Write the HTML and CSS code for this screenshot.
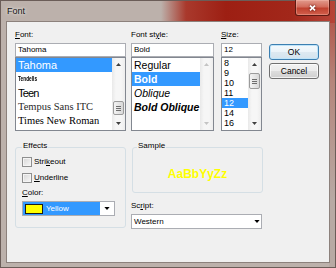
FILE: index.html
```html
<!DOCTYPE html>
<html>
<head>
<meta charset="utf-8">
<link rel="stylesheet" href="styles.css">
</head>
<body>
<div class="window">
  <div class="titlebar">
    <span class="title">Font</span>
    <div class="close"><svg width="7" height="6" viewBox="0 0 7 6"><path d="M1 0.6 L6 5.4 M6 0.6 L1 5.4" stroke="#fff" stroke-width="1.7"/></svg></div>
  </div>
  <div class="client">
    <div class="top">
      <div class="col col-font">
        <div class="label"><u>F</u>ont:</div>
        <div class="edit">Tahoma</div>
        <div class="list">
          <div class="items rows14">
            <div class="item sel f-tahoma">Tahoma</div>
            <div class="item f-tendells"><span>Tendells</span></div>
            <div class="item f-teen">Teen</div>
            <div class="item f-tempus">Tempus Sans ITC</div>
            <div class="item f-times">Times New Roman</div>
          </div>
          <div class="vscroll">
            <div class="sb-btn"><svg width="5" height="3" viewBox="0 0 7 4"><path d="M0 4 L3.5 0 L7 4Z" fill="#404040"/></svg></div>
            <div class="sb-track"><div class="thumb thumb-font"><i></i><i></i><i></i></div></div>
            <div class="sb-btn"><svg width="5" height="3" viewBox="0 0 7 4"><path d="M0 0 L3.5 4 L7 0Z" fill="#404040"/></svg></div>
          </div>
        </div>
      </div>
      <div class="col col-style">
        <div class="label">Font st<u>y</u>le:</div>
        <div class="edit">Bold</div>
        <div class="list">
          <div class="items rows14">
            <div class="item st">Regular</div>
            <div class="item st sel st-bold">Bold</div>
            <div class="item st st-italic">Oblique</div>
            <div class="item st st-bold st-italic">Bold Oblique</div>
          </div>
          <div class="vscroll">
            <div class="sb-btn"><svg width="5" height="3" viewBox="0 0 7 4"><path d="M0 4 L3.5 0 L7 4Z" fill="#c4c4c4"/></svg></div>
            <div class="sb-track"></div>
            <div class="sb-btn"><svg width="5" height="3" viewBox="0 0 7 4"><path d="M0 0 L3.5 4 L7 0Z" fill="#c4c4c4"/></svg></div>
          </div>
        </div>
      </div>
      <div class="col col-size">
        <div class="label"><u>S</u>ize:</div>
        <div class="edit">12</div>
        <div class="list">
          <div class="items rows10">
            <div class="item sz">8</div>
            <div class="item sz">9</div>
            <div class="item sz">10</div>
            <div class="item sz">11</div>
            <div class="item sz sel">12</div>
            <div class="item sz">14</div>
            <div class="item sz">16</div>
          </div>
          <div class="vscroll">
            <div class="sb-btn"><svg width="5" height="3" viewBox="0 0 7 4"><path d="M0 4 L3.5 0 L7 4Z" fill="#404040"/></svg></div>
            <div class="sb-track"><div class="thumb thumb-size"><i></i><i></i><i></i></div></div>
            <div class="sb-btn"><svg width="5" height="3" viewBox="0 0 7 4"><path d="M0 0 L3.5 4 L7 0Z" fill="#404040"/></svg></div>
          </div>
        </div>
      </div>
      <div class="col col-btns">
        <div class="btn btn-default">OK</div>
        <div class="btn">Cancel</div>
      </div>
    </div>
    <div class="bottom">
      <div class="group effects">
        <div class="legend">Effects</div>
        <div class="check-row first"><span class="checkbox"></span><span>Stri<u>k</u>eout</span></div>
        <div class="check-row"><span class="checkbox"></span><span><u>U</u>nderline</span></div>
        <div class="label color-label"><u>C</u>olor:</div>
        <div class="combo color-combo">
          <div class="combo-sel"><span class="swatch"></span><span>Yellow</span></div>
          <div class="combo-arrow"><svg width="6" height="3" viewBox="0 0 7 4"><path d="M0 0 L3.5 4 L7 0Z" fill="#000"/></svg></div>
        </div>
      </div>
      <div class="right">
        <div class="group sample">
          <div class="legend">Sample</div>
          <div class="sample-text">AaBbYyZz</div>
        </div>
        <div class="label script-label">Sc<u>r</u>ipt:</div>
        <div class="combo script-combo">
          <div class="combo-text">Western</div>
          <div class="combo-arrow"><svg width="6" height="3" viewBox="0 0 7 4"><path d="M0 0 L3.5 4 L7 0Z" fill="#000"/></svg></div>
        </div>
      </div>
    </div>
  </div>
</div>
</body>
</html>
```

FILE: styles.css
```css
html, body {
  margin: 0;
  padding: 0;
  background: #ffffff;
}

.window {
  width: 336px;
  height: 268px;
  box-sizing: border-box;
  padding: 0 5px 4px 5px;
  display: flex;
  flex-direction: column;
  font-family: "Liberation Sans", Arial, sans-serif;
  color: #000;
  border: 1px solid #6b5d58;
  background:
    linear-gradient(to right, rgba(0,0,0,0) 0px, rgba(0,0,0,0) 160px, #a9392c 185px, #9d1f13 225px, #a2271a 290px, #b8463a 336px) top left / 100% 22px no-repeat,
    linear-gradient(to bottom, #b24a3e 0px, #b5857b 80px, #b8aaa4 200px) top right / 6px 100% no-repeat,
    #bcb1ab;
}

.titlebar {
  height: 21px;
  margin-top: -1px;
  display: flex;
  justify-content: space-between;
  align-items: flex-start;
  flex-shrink: 0;
}

.title {
  font-family: "Liberation Sans", Arial, sans-serif;
  font-size: 9px;
  line-height: 10px;
  margin: 6px 0 0 1px;
  color: #151515;
  text-shadow: 0 0 3px rgba(255, 255, 255, 0.8), 0 0 6px rgba(255, 255, 255, 0.5);
}

.close {
  width: 35px;
  height: 16px;
  box-sizing: border-box;
  margin-right: 0px;
  border: 1px solid #5e1a12;
  border-top: none;
  border-radius: 0 0 3px 3px;
  background: linear-gradient(to bottom, #e19a8c 0%, #d36c5c 45%, #c0412f 55%, #d2604c 100%);
  box-shadow: inset 0 0 0 1px rgba(255, 200, 190, 0.35);
  display: flex;
  align-items: center;
  justify-content: center;
}

.close svg {
  filter: drop-shadow(0 0 1px rgba(60, 0, 0, 0.9));
}

.client {
  flex: 1;
  box-sizing: border-box;
  background: #f0f0f0;
  border: 1px solid #8c817c;
  padding: 8px 0 0 8px;
  display: flex;
  flex-direction: column;
  font-size: 8px;
}

.top {
  display: flex;
  align-items: flex-start;
}

.col {
  display: flex;
  flex-direction: column;
}

.col-font { width: 111px; margin-right: 5px; }
.col-style { width: 83px; margin-right: 7px; }
.col-size { width: 41px; margin-right: 7px; }
.col-btns { width: 50px; }

.label {
  font-size: 8px;
  line-height: 10px;
  height: 13px;
  white-space: nowrap;
}

.edit {
  height: 14px;
  box-sizing: border-box;
  border: 1px solid #abadb3;
  border-top-color: #abadb3;
  background: #fff;
  padding-left: 2px;
  font-size: 8px;
  line-height: 12px;
  white-space: nowrap;
}

.list {
  height: 74px;
  box-sizing: border-box;
  border: 1px solid #828790;
  background: #fff;
  display: flex;
  overflow: hidden;
}

.items {
  flex: 1;
  overflow: hidden;
  min-width: 0;
}

.item {
  white-space: nowrap;
  padding-left: 2px;
  overflow: hidden;
}

.rows14 .item {
  height: 14px;
  line-height: 14px;
}

.rows10 .item {
  height: 10px;
  line-height: 10px;
}

.item.sel {
  background: #3399ff;
  color: #fff;
}

.f-tahoma {
  font-family: "Liberation Sans", Arial, sans-serif;
  font-size: 11px;
}

.f-tendells span {
  display: inline-block;
  font-family: "Liberation Sans", Arial, sans-serif;
  font-weight: bold;
  font-size: 8px;
  transform: scaleX(0.6);
  transform-origin: left center;
}

.f-teen {
  font-family: "Liberation Sans", Arial, sans-serif;
  font-size: 11px;
  letter-spacing: -0.8px;
}

.f-tempus {
  font-family: "Liberation Serif", "Times New Roman", serif;
  font-size: 10.5px;
  color: #2a2a2a;
}

.f-times {
  font-family: "Liberation Serif", "Times New Roman", serif;
  font-size: 10.5px;
}

.st {
  font-family: "Liberation Sans", Arial, sans-serif;
  font-size: 10.5px;
}

.st-bold { font-weight: bold; }
.st-italic { font-style: italic; }

.sz {
  font-size: 9px;
}

.vscroll {
  width: 13px;
  flex-shrink: 0;
  display: flex;
  flex-direction: column;
  background: linear-gradient(to right, #e9e9e9, #f6f6f6 30%, #f6f6f6 70%, #ededed);
}

.sb-btn {
  height: 13px;
  flex-shrink: 0;
  display: flex;
  align-items: center;
  justify-content: center;
}

.sb-btn svg { display: block; }

.sb-track {
  flex: 1;
  display: flex;
  flex-direction: column;
}

.thumb {
  margin: 0 1px;
  box-sizing: border-box;
  border: 1px solid #9b9b9b;
  border-radius: 2px;
  background: linear-gradient(to right, #f3f3f3, #e6e6e6 50%, #d8d8d8);
  display: flex;
  flex-direction: column;
  align-items: center;
  justify-content: center;
  gap: 1px;
}

.thumb i {
  display: block;
  width: 5px;
  height: 1px;
  background: #6d6d6d;
}

.thumb-font {
  margin-top: 30px;
  height: 14px;
}

.thumb-size {
  margin-top: 2px;
  height: 16px;
}

.btn {
  height: 16px;
  box-sizing: border-box;
  border: 1px solid #707070;
  border-radius: 3px;
  background: linear-gradient(to bottom, #f2f2f2 0%, #ebebeb 50%, #dddddd 51%, #cfcfcf 100%);
  box-shadow: inset 0 0 0 1px rgba(255, 255, 255, 0.7);
  font-size: 8.5px;
  line-height: 14px;
  text-align: center;
}

.btn-default {
  margin-top: 14px;
  margin-bottom: 3px;
  border-color: #3c7fb1;
  background: linear-gradient(to bottom, #f4f9fc 0%, #eaf3f9 50%, #dde9f1 51%, #d3e3ee 100%);
  box-shadow: inset 0 0 0 1px #bfe4f9;
}

.bottom {
  display: flex;
  align-items: flex-start;
}

.group {
  box-sizing: border-box;
  border: 1px solid #d5dfe5;
  border-radius: 3px;
  display: flex;
  flex-direction: column;
  align-items: flex-start;
}

.legend {
  font-size: 8px;
  line-height: 10px;
  height: 10px;
  background: #f0f0f0;
  padding: 0 1px;
  margin-top: -7px;
}

.effects {
  width: 111px;
  height: 81px;
  margin-top: 16px;
  margin-right: 5px;
  padding-left: 6px;
}

.check-row {
  display: flex;
  align-items: center;
  height: 10px;
  line-height: 10px;
  margin-top: 6px;
  font-size: 8px;
  white-space: nowrap;
}

.checkbox {
  width: 10px;
  height: 10px;
  box-sizing: border-box;
  border: 1px solid #8e8f8f;
  background: linear-gradient(135deg, #d6d6d6, #f8f8f8);
  box-shadow: inset 0 0 0 1px #f4f4f4;
  margin-right: 2px;
}

.color-label {
  margin-top: 5px;
  height: 10px;
}

.combo {
  box-sizing: border-box;
  height: 15px;
  border: 1px solid #abadb3;
  background: #fff;
  display: flex;
  align-items: stretch;
}

.color-combo {
  width: 93px;
  margin-top: 3px;
}

.combo-sel {
  width: 77px;
  background: #3399ff;
  color: #fff;
  display: flex;
  align-items: center;
  font-size: 8px;
  line-height: 13px;
}

.swatch {
  width: 18px;
  height: 10px;
  box-sizing: border-box;
  border: 1px solid #1a1a1a;
  background: #ffff00;
  margin: 0 3px 0 2px;
}

.combo-arrow {
  flex: 1;
  display: flex;
  align-items: center;
  justify-content: center;
}

.combo-arrow svg { display: block; }

.right {
  display: flex;
  flex-direction: column;
  align-items: flex-start;
}

.sample {
  width: 131px;
  height: 46px;
  margin-top: 16px;
  margin-left: 1px;
  padding-left: 4px;
}

.sample-text {
  align-self: stretch;
  margin-left: -4px;
  flex: 1;
  display: flex;
  align-items: center;
  justify-content: center;
  padding-top: 4px;
  font-family: "Liberation Sans", Arial, sans-serif;
  font-weight: bold;
  font-size: 12px;
  color: #ffff00;
}

.script-label {
  margin-top: 8px;
  height: 10px;
}

.script-combo {
  width: 131px;
  margin-top: 3px;
}

.combo-text {
  width: 118px;
  padding-left: 2px;
  font-size: 8px;
  line-height: 13px;
}
```
